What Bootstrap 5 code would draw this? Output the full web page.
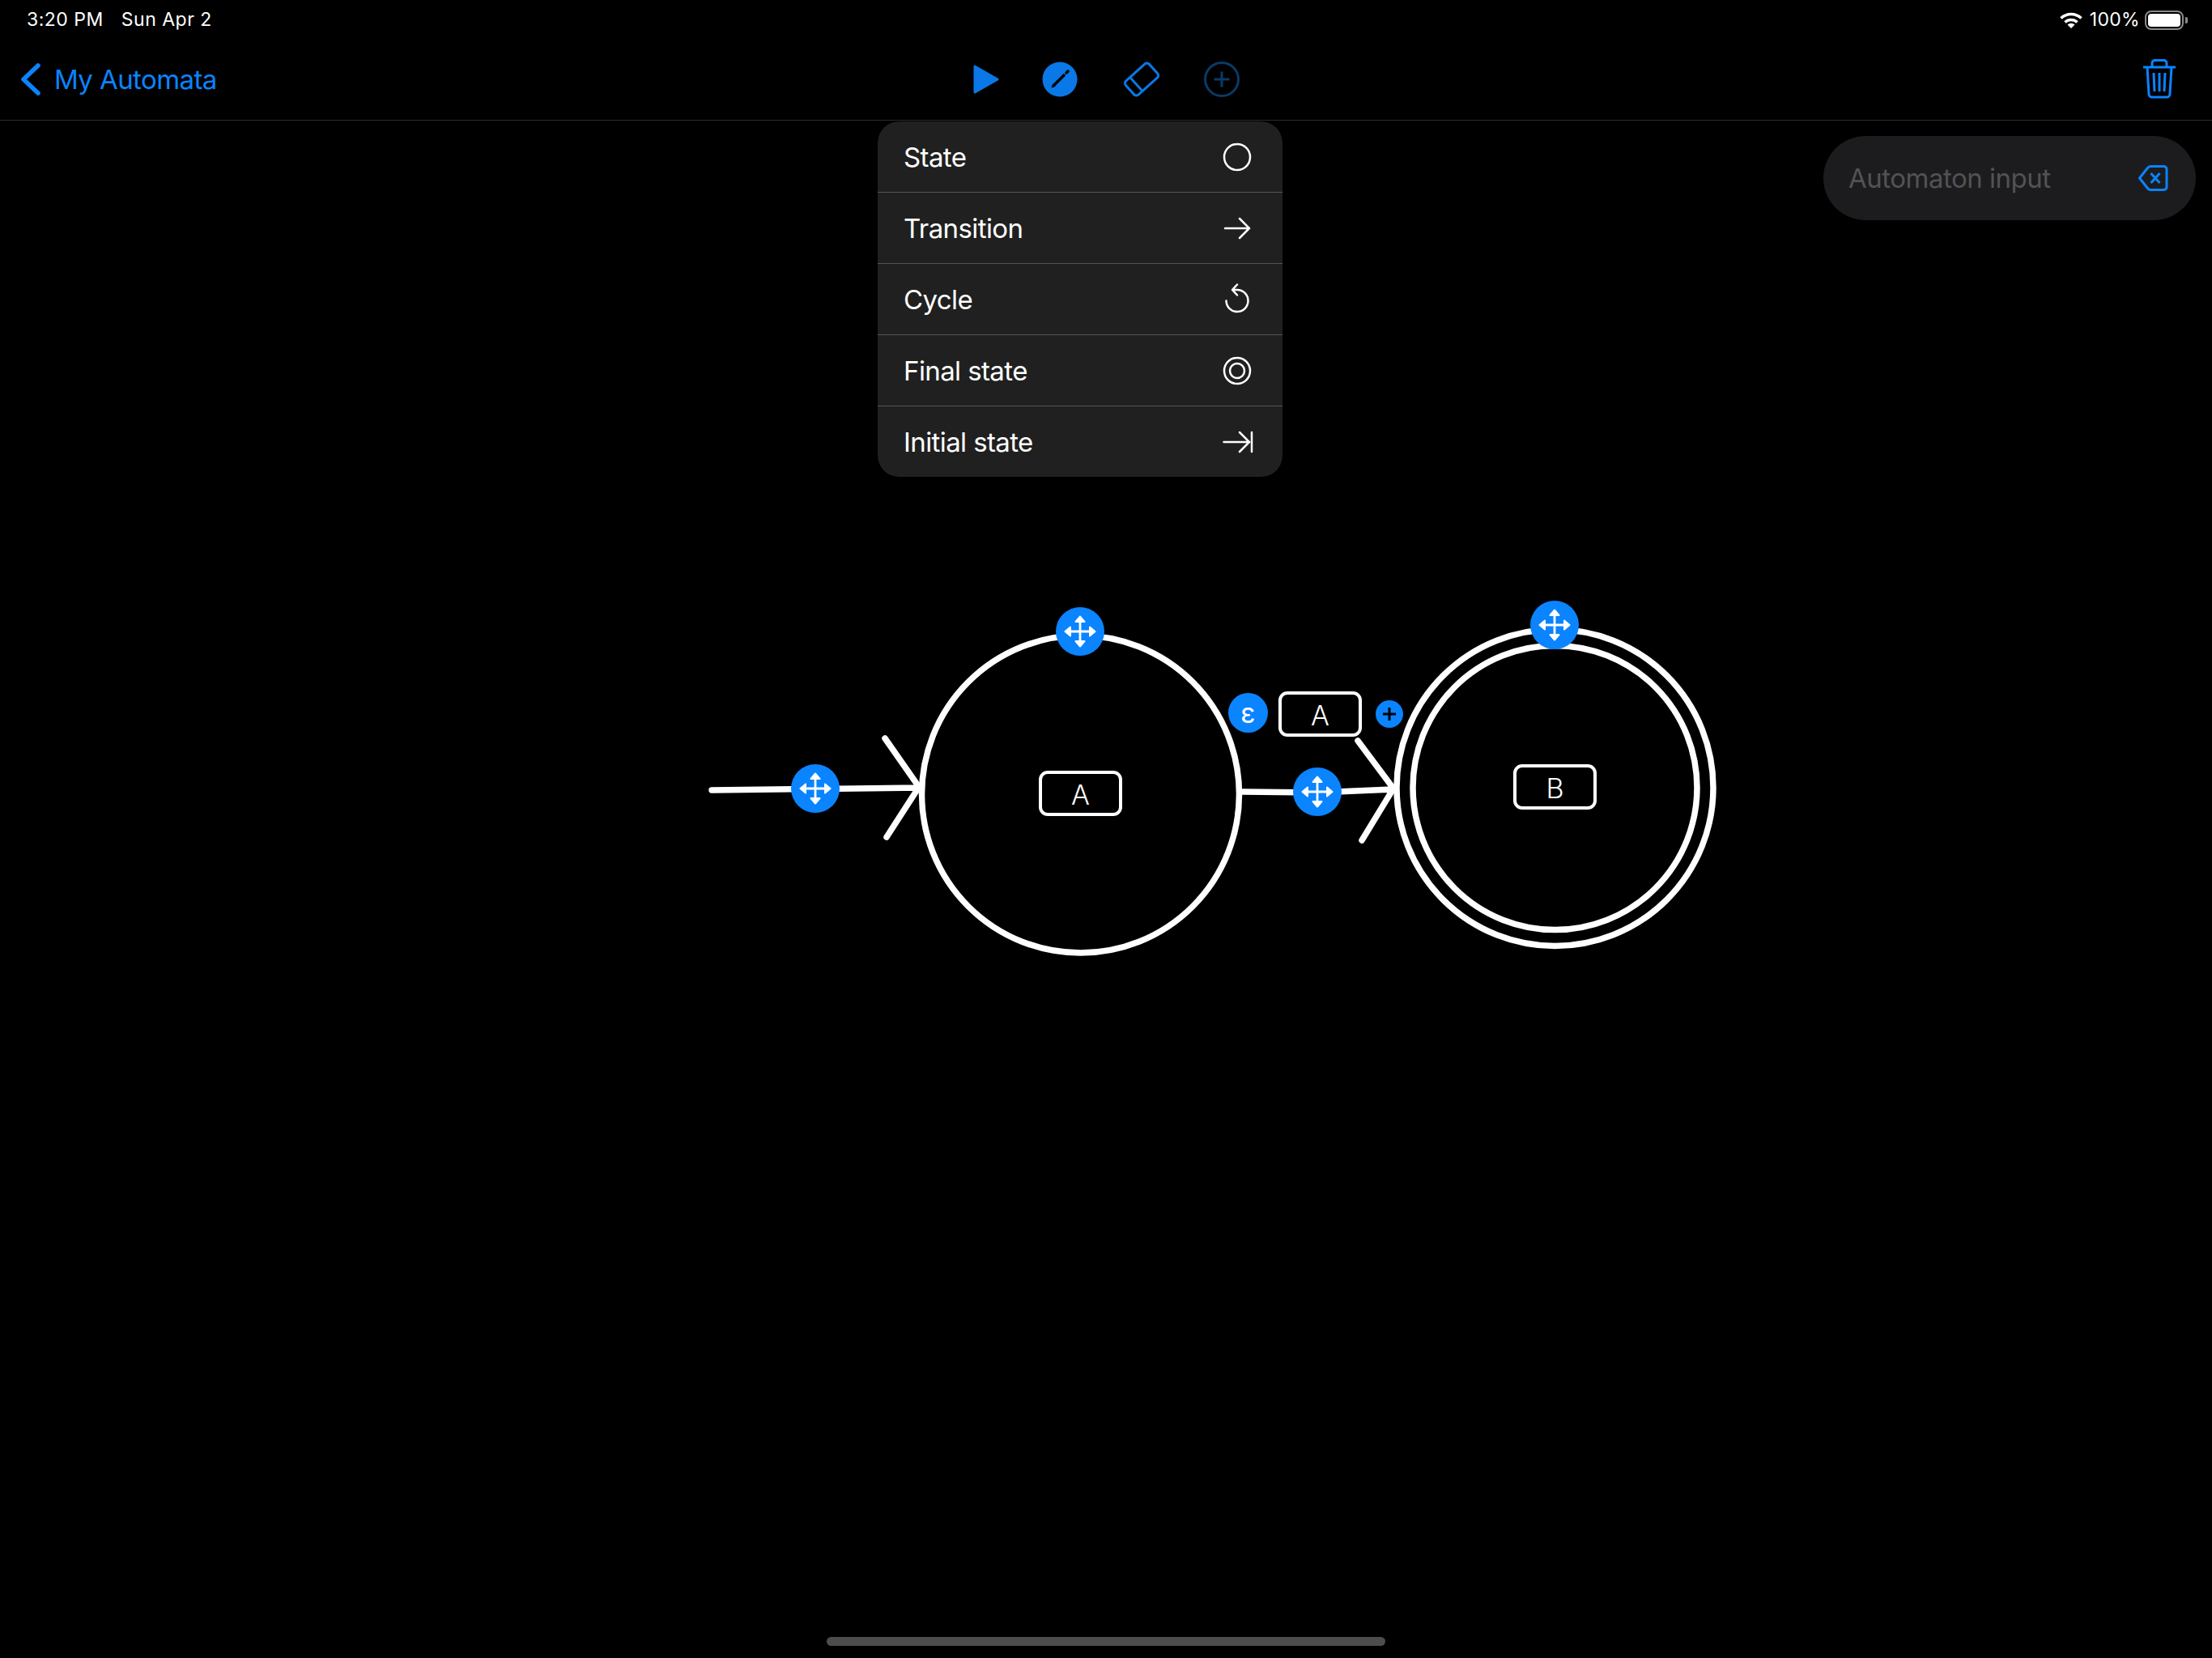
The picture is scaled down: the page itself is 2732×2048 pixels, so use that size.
<!DOCTYPE html>
<html lang="en">
<head>
    <meta charset="UTF-8">
    <meta name="viewport" content="width=device-width, initial-scale=1.0">
    <title>My Automata</title>

    <link rel="stylesheet" href="https://cdn.jsdelivr.net/npm/bootstrap@5.3.3/dist/css/bootstrap.min.css">
    <script src="https://cdn.jsdelivr.net/npm/bootstrap@5.3.3/dist/js/bootstrap.bundle.min.js"></script>
    <style>
        body {
            width: 2732px;
            height: 2048px;
            background: #000;
            color: #fff;
            font-family: Inter, "Liberation Sans", sans-serif;
            overflow: hidden;
        }
        .status-row { height: 48px; padding: 1px 30px 0 33px; font-size: 23px; letter-spacing: 0.5px; }
        .status-date { margin-left: 22px; }
        .status-pct { margin: 0 6px 0 9px; letter-spacing: 0.3px; }
        .nav-row { height: 101px; padding: 0 44px 0 24px; border-bottom: 1px solid #2b2b2b; position: relative; }
        .back-link { color: #0a84ff; font-size: 33px; letter-spacing: -0.6px; text-decoration: none; gap: 15px; }
        .back-label { padding-top: 2px; }
        .tool-group { gap: 55px; position: absolute; left: 1202px; top: 28px; }
        .tool-pencil { margin-left: -2px; margin-right: 2px; }
        .input-pill { width: 460px; height: 104px; margin: 19px 20px 0 auto; padding: 0 34px 0 31px; background: #1c1c1e; }
        .input-hint { color: #525255; font-size: 33px; letter-spacing: -0.5px; padding-top: 2px; }
        .add-menu { position: absolute; left: 1084px; top: 150px; width: 500px; border-radius: 26px; z-index: 5; }
        .add-menu .list-group-item {
            height: 88px;
            padding: 0 36px 0 32px;
            background: #202020;
            color: #fff;
            border-color: #555;
            font-size: 33px;
            letter-spacing: -0.6px;
        }
        .add-menu .list-group-item:last-child { height: 87px; }
        .item-label { padding-top: 2px; }
        .diagram { position: absolute; left: 0; top: 0; }
        .name-box {
            position: absolute;
            width: 103px;
            height: 56px;
            padding-top: 2px;
            border: 4px solid #fff;
            border-radius: 11px;
            font-size: 34px;
            font-weight: 300;
            color: #fff;
        }
        .name-a { left: 1283px; top: 952px; }
        .name-b { left: 1869px; top: 944px; }
        .name-edge { left: 1579px; top: 854px; }
        .eps-btn {
            position: absolute;
            left: 1517px;
            top: 856px;
            width: 49px;
            height: 49px;
            background: #0a84ff;
            color: #fff;
            font-size: 34px;
        }
        .plus-btn { position: absolute; left: 1699px; top: 865px; width: 34px; height: 34px; background: #0a84ff; }
        .home-bar { position: absolute; left: 1021px; top: 2022px; width: 690px; height: 11px; background: #4d4d4d; }
    </style>
</head>
<body class="position-relative">
    <div class="status-row d-flex align-items-center justify-content-between">
        <div><span>3:20 PM</span><span class="status-date">Sun Apr 2</span></div>
        <div class="d-flex align-items-center">
            <svg width="28" height="20" viewBox="0 0 28 20" fill="none" stroke="#fff" stroke-width="3.6">
                <path d="M1.5 7.5A18 18 0 0 1 26.5 7.5"/>
                <path d="M6.5 12.5A11 11 0 0 1 21.5 12.5"/>
                <path d="M14 20L9.5 15.5A6.4 6.4 0 0 1 18.5 15.5Z" fill="#fff" stroke="none"/>
            </svg>
            <span class="status-pct">100%</span>
            <svg width="53" height="24" viewBox="0 0 53 24">
                <rect x="1" y="1" width="46" height="22" rx="7" fill="none" stroke="#8a8a8a" stroke-width="2"/>
                <rect x="4" y="4" width="40" height="16" rx="4" fill="#fff"/>
                <path d="M50 8a4 4 0 0 1 0 8z" fill="#8a8a8a"/>
            </svg>
        </div>
    </div>

    <div class="nav-row d-flex align-items-center justify-content-between">
        <a href="#" class="back-link d-flex align-items-center">
            <svg width="28" height="40" viewBox="0 0 28 40" fill="none" stroke="#0a84ff" stroke-width="5.5" stroke-linecap="round" stroke-linejoin="round"><path d="M23 3L5 20L23 37"/></svg>
            <span class="back-label">My Automata</span>
        </a>
        <div class="tool-group d-flex align-items-center">
            <svg width="32" height="44" viewBox="0 0 32 44"><path d="M2 6L30 22L2 38Z" fill="#0a78e6" stroke="#0a78e6" stroke-width="3" stroke-linejoin="round"/></svg>
            <svg class="tool-pencil" width="44" height="44" viewBox="-22 -22 44 44">
                <circle r="21.5" fill="#0a78e6"/>
                <path d="M-10.5 10.5L-9 5.5L-5.5 9Z" fill="#000"/>
                <path d="M-7.5 7.5L6 -6" stroke="#000" stroke-width="3.5"/>
                <path d="M8 -8L10 -10" stroke="#000" stroke-width="3.5" stroke-linecap="round"/>
            </svg>
            <svg width="44" height="44" viewBox="-22 -22 44 44" fill="none" stroke="#0a78e6" stroke-width="3">
                <g transform="rotate(-42)">
                    <rect x="-19.5" y="-11.5" width="39" height="23" rx="4"/>
                    <path d="M-9 -11.5V11.5"/>
                </g>
            </svg>
            <svg width="44" height="44" viewBox="-22 -22 44 44" fill="none" stroke="#0b3a66" stroke-width="3">
                <circle r="20.5"/>
                <path d="M-9.5 0H9.5M0 -9.5V9.5"/>
            </svg>
        </div>
        <svg width="42" height="50" viewBox="0 0 42 50" fill="none" stroke="#0a84ff" stroke-width="3">
            <path d="M1 10H41"/>
            <path d="M12 10V5a3.5 3.5 0 0 1 3.5-3.5h11A3.5 3.5 0 0 1 30 5V10"/>
            <path d="M6 10L8 43a4 4 0 0 0 4 4H30a4 4 0 0 0 4-4L36 10"/>
            <path d="M14 17L15 40M21 17V40M28 17L27 40"/>
        </svg>
    </div>

    <div class="input-pill rounded-pill d-flex align-items-center justify-content-between">
        <span class="input-hint">Automaton input</span>
        <svg width="37" height="32" viewBox="0 0 37 32" fill="none" stroke="#0a84ff" stroke-width="3" stroke-linejoin="round">
            <path d="M1.5 16L11.5 3.5Q13 1.5 15 1.5H31.5a3.5 3.5 0 0 1 3.5 3.5V27a3.5 3.5 0 0 1-3.5 3.5H15Q13 30.5 11.500 28.500Z"/>
            <path d="M15.500 10L26.500 22M26.500 10L15.500 22"/>
        </svg>
    </div>

    <div class="add-menu list-group list-group-flush overflow-hidden">
        <div class="list-group-item d-flex align-items-center justify-content-between">
            <span class="item-label">State</span>
            <svg width="40" height="40" viewBox="0 0 40 40" fill="none" stroke="#fff" stroke-width="2.5"><circle cx="20" cy="20" r="16"/></svg>
        </div>
        <div class="list-group-item d-flex align-items-center justify-content-between">
            <span class="item-label">Transition</span>
            <svg width="40" height="40" viewBox="0 0 40 40" fill="none" stroke="#fff" stroke-width="2.5" stroke-linecap="round"><path d="M5 20H35M23 8L35 20L23 32"/></svg>
        </div>
        <div class="list-group-item d-flex align-items-center justify-content-between">
            <span class="item-label">Cycle</span>
            <svg width="40" height="40" viewBox="0 0 40 40" fill="none" stroke="#fff" stroke-width="2.5" stroke-linecap="round" stroke-linejoin="round"><path d="M15 8H20A13.500 13.500 0 1 1 6.500 21.500M20 1.500L14 8L20 14.500"/></svg>
        </div>
        <div class="list-group-item d-flex align-items-center justify-content-between">
            <span class="item-label">Final state</span>
            <svg width="40" height="40" viewBox="0 0 40 40" fill="none" stroke="#fff" stroke-width="2.5"><circle cx="20" cy="20" r="16"/><circle cx="20" cy="20" r="9"/></svg>
        </div>
        <div class="list-group-item d-flex align-items-center justify-content-between">
            <span class="item-label">Initial state</span>
            <svg width="40" height="40" viewBox="0 0 40 40" fill="none" stroke="#fff" stroke-width="2.5" stroke-linecap="round"><path d="M3.500 20H35M23 8L35 20L23 32M38 8V32"/></svg>
        </div>
    </div>

    <svg class="diagram" width="2732" height="2048" viewBox="0 0 2732 2048" fill="none" stroke="#fff" stroke-width="7.500" stroke-linecap="round">
        <defs>
            <g id="moveHandle">
                <circle r="30" fill="#0a84ff" stroke="none"/>
                <path d="M0 -16V16M-16 0H16" stroke="#fff" stroke-width="2.800"/>
                <path d="M0 -18.500L5.500 -12H-5.500ZM0 18.500L5.500 12H-5.500ZM-18.500 0L-12 5.500V-5.500ZM18.500 0L12 5.500V-5.500Z" fill="#fff" stroke="#fff" stroke-width="2" stroke-linejoin="round"/>
            </g>
        </defs>

        <circle cx="1334.500" cy="981" r="196"/>
        <circle cx="1920.500" cy="973" r="195.500"/>
        <circle cx="1920.500" cy="973" r="175.500"/>

        <path d="M879 976L1135 973M1093 912L1135 972L1095 1034"/>
        <path d="M1534 978L1627 979L1720 975M1677 915L1721 974L1682 1038"/>

        <use href="#moveHandle" x="1334" y="780"/>
        <use href="#moveHandle" x="1007" y="974"/>
        <use href="#moveHandle" x="1627" y="978"/>
        <use href="#moveHandle" x="1920" y="772"/>
    </svg>

    <div class="name-box name-a d-flex align-items-center justify-content-center">A</div>
    <div class="name-box name-b d-flex align-items-center justify-content-center">B</div>
    <div class="name-box name-edge d-flex align-items-center justify-content-center">A</div>
    <div class="eps-btn rounded-circle d-flex align-items-center justify-content-center">ε</div>
    <div class="plus-btn rounded-circle d-flex align-items-center justify-content-center">
        <svg width="18" height="18" viewBox="0 0 18 18" stroke="#000" stroke-width="3"><path d="M1 9H17M9 1V17"/></svg>
    </div>

    <div class="home-bar rounded-pill"></div>
</body>
</html>
